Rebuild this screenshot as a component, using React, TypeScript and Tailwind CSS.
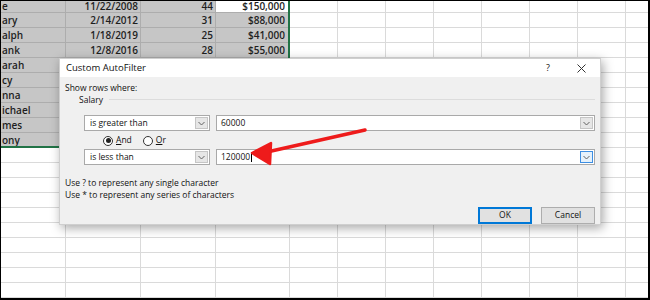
import React from "react";

type Row = { name: string; date: string; age: string; salary: string };

const rows: Row[] = [
  { name: "e", date: "11/22/2008", age: "44", salary: "$150,000" },
  { name: "ary", date: "2/14/2012", age: "31", salary: "$88,000" },
  { name: "alph", date: "1/18/2019", age: "25", salary: "$41,000" },
  { name: "ank", date: "12/8/2016", age: "28", salary: "$55,000" },
  { name: "arah", date: "", age: "", salary: "" },
  { name: "cy", date: "", age: "", salary: "" },
  { name: "nna", date: "", age: "", salary: "" },
  { name: "ichael", date: "", age: "", salary: "" },
  { name: "mes", date: "", age: "", salary: "" },
  { name: "ony", date: "", age: "", salary: "" },
];

const EMPTY_COLS = 8;
const TOTAL_ROWS = 21;

const Chevron = () => (
  <svg width="7" height="5" viewBox="0 0 7 5" fill="none" stroke="#606060" strokeWidth="1">
    <path d="M0.5 1 L3.5 4 L6.5 1" />
  </svg>
);

const DropButton = ({ focused = false }: { focused?: boolean }) => (
  <div
    className={
      focused
        ? "w-[13px] h-full flex items-center justify-center border border-[#3d8ee2] bg-[#e5f1fb]"
        : "w-[13px] h-full flex items-center justify-center border border-[#c5c5c5] bg-[#e6e6e6]"
    }
  >
    <Chevron />
  </div>
);

const Select = ({ value }: { value: string }) => (
  <div className="w-[126px] h-[16px] flex items-center bg-white border border-[#a9a9a9] p-px">
    <span className="flex-1 pl-[4px] leading-none">{value}</span>
    <DropButton />
  </div>
);

const ValueBox = ({ value, focused = false }: { value: string; focused?: boolean }) => (
  <div className="flex-1 h-[16px] flex items-center bg-white border border-[#a9a9a9] p-px">
    <span className="flex-1 pl-[3px] leading-none flex items-center">
      {value}
      {focused && <span className="inline-block w-px h-[10px] bg-black ml-px" />}
    </span>
    <DropButton focused={focused} />
  </div>
);

const Radio = ({ checked, label }: { checked: boolean; label: React.ReactNode }) => (
  <div className="flex items-center gap-[3px]">
    <div className="w-[10px] h-[10px] rounded-full border border-[#333] bg-white flex items-center justify-center">
      {checked && <div className="w-[5px] h-[5px] rounded-full bg-[#222]" />}
    </div>
    <span className="leading-none">{label}</span>
  </div>
);

const Dialog = () => (
  <div
    className="absolute left-[58px] top-[57px] w-[542px] h-[167px] flex flex-col border border-[#cfcfcf] shadow-[2px_3px_10px_rgba(0,0,0,0.35)] text-[8.5px] text-[#111]"
    style={{ fontFamily: '"Open Sans", "Liberation Sans", sans-serif' }}
  >
    {/* title bar */}
    <div className="h-[22px] bg-white flex items-center pl-[6px] pr-[14px]">
      <span className="flex-1 text-[9.5px]">Custom AutoFilter</span>
      <span className="text-[9px] w-[10px] text-center mr-[24px]">?</span>
      <svg width="9" height="9" viewBox="0 0 9 9" stroke="#333" strokeWidth="1">
        <path d="M0.5 0.5 L8.5 8.5 M8.5 0.5 L0.5 8.5" />
      </svg>
    </div>

    {/* body */}
    <div className="flex-1 bg-[#f0f0f0] flex flex-col px-[5px]">
      <div className="mt-[5px] h-[12px] flex items-center">Show rows where:</div>
      <div className="h-[12px] flex items-center pl-[14px] gap-[6px]">
        <span>Salary</span>
        <div className="flex-1 h-px bg-[#dcdcdc] -mt-[2px]" />
      </div>

      <div className="mt-[9px] flex gap-[6px] pl-[19px]">
        <Select value="is greater than" />
        <ValueBox value="60000" />
      </div>

      <div className="h-[17px] flex items-center gap-[11px] pl-[38px] mt-px">
        <Radio
          checked
          label={
            <>
              <span className="underline">A</span>nd
            </>
          }
        />
        <Radio
          checked={false}
          label={
            <>
              <span className="underline">O</span>r
            </>
          }
        />
      </div>

      <div className="flex gap-[6px] pl-[19px]">
        <Select value="is less than" />
        <ValueBox value="120000" focused />
      </div>

      <div className="mt-[12px] h-[12px] flex items-center">Use ? to represent any single character</div>
      <div className="h-[12px] flex items-center">Use * to represent any series of characters</div>

      <div className="mt-[6px] flex justify-end gap-[9px]">
        <button className="w-[54px] h-[17px] bg-[#e1e1e1] border-2 border-[#0078d7] flex items-center justify-center text-[8.5px]">
          OK
        </button>
        <button className="w-[54px] h-[17px] bg-[#e1e1e1] border border-[#adadad] flex items-center justify-center text-[8.5px]">
          Cancel
        </button>
      </div>
    </div>
  </div>
);

const Arrow = () => (
  <svg className="absolute left-0 top-0 pointer-events-none" width="650" height="300" viewBox="0 0 650 300">
    <line x1="364" y1="129" x2="266" y2="151" stroke="#ee1b1b" strokeWidth="3.5" strokeLinecap="round" />
    <polygon
      points="251,152 270,142 269,163"
      fill="#ee1b1b"
      stroke="#ee1b1b"
      strokeWidth="2.5"
      strokeLinejoin="round"
    />
  </svg>
);

export default function App() {
  return (
    <div className="relative w-[650px] h-[300px] overflow-hidden bg-white border-t border-l border-r-2 border-b-2 border-black">
      <div
        className="relative grid grid-cols-[65px_75px_75px_74px_repeat(8,48px)] text-[10px] text-[#1e1e1e]"
        style={{ fontFamily: '"Open Sans", "Liberation Sans", sans-serif' }}
      >
        {Array.from({ length: TOTAL_ROWS }).map((_, r) => {
          const data = rows[r];
          const sel = !!data;
          // first row is partly scrolled out of view
          const size = r === 0 ? "h-[12px] leading-[11px]" : "h-[15px] leading-[14px]";
          const cellBase = `${size} border-r border-b whitespace-nowrap`;
          const selCell = `${cellBase} bg-[#c6c6c6] border-[#adadad] font-semibold`;
          const plain = `${cellBase} bg-white border-[#dadada]`;
          return (
            <React.Fragment key={r}>
              <div className={sel ? `${selCell} pl-px` : plain}>{data?.name}</div>
              <div className={sel ? `${selCell} text-right pr-[2px]` : plain}>{data?.date}</div>
              <div className={sel ? `${selCell} text-right pr-[2px]` : plain}>{data?.age}</div>
              <div
                className={
                  r === 0
                    ? `${cellBase} bg-white border-[#adadad] font-semibold text-right pr-[4px]`
                    : sel
                    ? `${selCell} text-right pr-[4px]`
                    : plain
                }
              >
                {data?.salary}
              </div>
              {Array.from({ length: EMPTY_COLS }).map((__, c) => (
                <div key={c} className={plain} />
              ))}
            </React.Fragment>
          );
        })}
        <div className="absolute left-0 top-0 w-[289px] h-[147px] border-r-2 border-b-2 border-[#217346] pointer-events-none" />
      </div>
      <Dialog />
      <Arrow />
    </div>
  );
}
